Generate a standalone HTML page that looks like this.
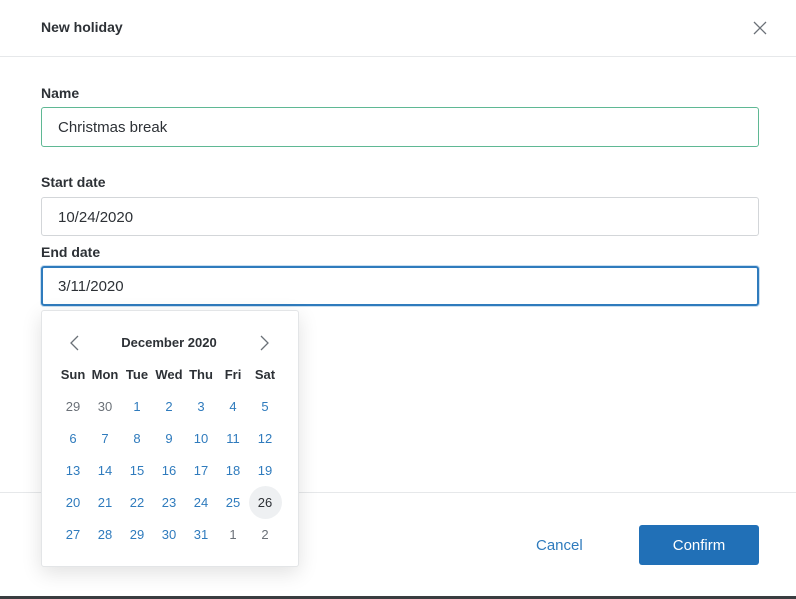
<!DOCTYPE html><html><head><style>
body{margin:0;width:796px;height:599px;background:#fff;font-family:"Liberation Sans",sans-serif;position:relative;overflow:hidden;color:#2d3136}
.a{position:absolute}
.lbl{font-weight:bold;font-size:14px;color:#2d3136;left:41px}
.inp{left:41px;width:718px;height:39px;border:1px solid #d3d6d9;border-radius:3px;box-sizing:border-box;font-size:15px;line-height:40px;padding-left:16px;color:#2d3136}
.c{position:absolute;width:32px;text-align:center;font-size:13px;margin-left:-16px}
</style></head><body>
<div class="a" style="left:41px;top:19px;font-weight:bold;font-size:14px">New holiday</div>
<svg class="a" style="left:753px;top:21px" width="14" height="14"><path d="M1 1L13 13M13 1L1 13" stroke="#6b7178" stroke-width="1.3"/></svg>
<div class="a" style="left:0;top:56px;width:796px;height:1px;background:#e6e8ea"></div>
<div class="a lbl" style="top:85px">Name</div>
<div class="a inp" style="top:107px;height:40px;border-color:#5fb894;line-height:40px">Christmas break</div>
<div class="a lbl" style="top:174px">Start date</div>
<div class="a inp" style="top:197px">10/24/2020</div>
<div class="a lbl" style="top:244px">End date</div>
<div class="a inp" style="top:266px;height:40px;border:2px solid #2f7bbd;padding-left:15px;line-height:38px;box-shadow:0 0 0 1px #c9def0">3/11/2020</div>
<div class="a" style="left:0;top:492px;width:796px;height:1px;background:#e6e8ea"></div>
<div class="a" style="left:536px;top:537px;font-size:15px;color:#2f7bbd">Cancel</div>
<div class="a" style="left:639px;top:525px;width:120px;height:40px;background:#2170b7;border-radius:3px;color:#fff;font-size:15px;text-align:center;line-height:41px">Confirm</div>
<div class="a" style="left:0;top:596px;width:796px;height:3px;background:#3a3d40"></div>
<div class="a" style="left:41px;top:310px;width:256px;height:255px;border:1px solid #e3e5e7;border-radius:3px;background:#fff;box-shadow:0 6px 20px rgba(0,0,0,0.12)"></div>
<svg class="a" style="left:68px;top:335px" width="12" height="16"><path d="M10 1L3 8L10 15" stroke="#6b7178" stroke-width="1.3" fill="none"/></svg>
<svg class="a" style="left:259px;top:335px" width="12" height="16"><path d="M2 1L9 8L2 15" stroke="#6b7178" stroke-width="1.3" fill="none"/></svg>
<div class="a" style="left:169px;top:335px;width:120px;margin-left:-60px;text-align:center;font-weight:bold;font-size:13px">December 2020</div>
<div class="a" style="left:249px;top:486px;width:33px;height:33px;border-radius:50%;background:#eef0f2"></div>
<div id="cal"></div>
<script>
var xs=[73,105,137,169,201,233,265],h=["Sun","Mon","Tue","Wed","Thu","Fri","Sat"],s="";
h.forEach(function(t,i){s+='<div class="c" style="left:'+xs[i]+'px;top:367px;font-weight:bold">'+t+'</div>'});
var d=[29,30];for(var i=1;i<=31;i++)d.push(i);d.push(1,2);
d.forEach(function(n,k){var r=Math.floor(k/7),c=k%7,g=(k<2||k>32),col=g?'#6b7178':(n==26?'#2d3136':'#2f7bbd');
s+='<div class="c" style="left:'+xs[c]+'px;top:'+(399+r*32)+'px;color:'+col+'">'+n+'</div>'});
document.getElementById('cal').innerHTML=s;
</script>
</body></html>
